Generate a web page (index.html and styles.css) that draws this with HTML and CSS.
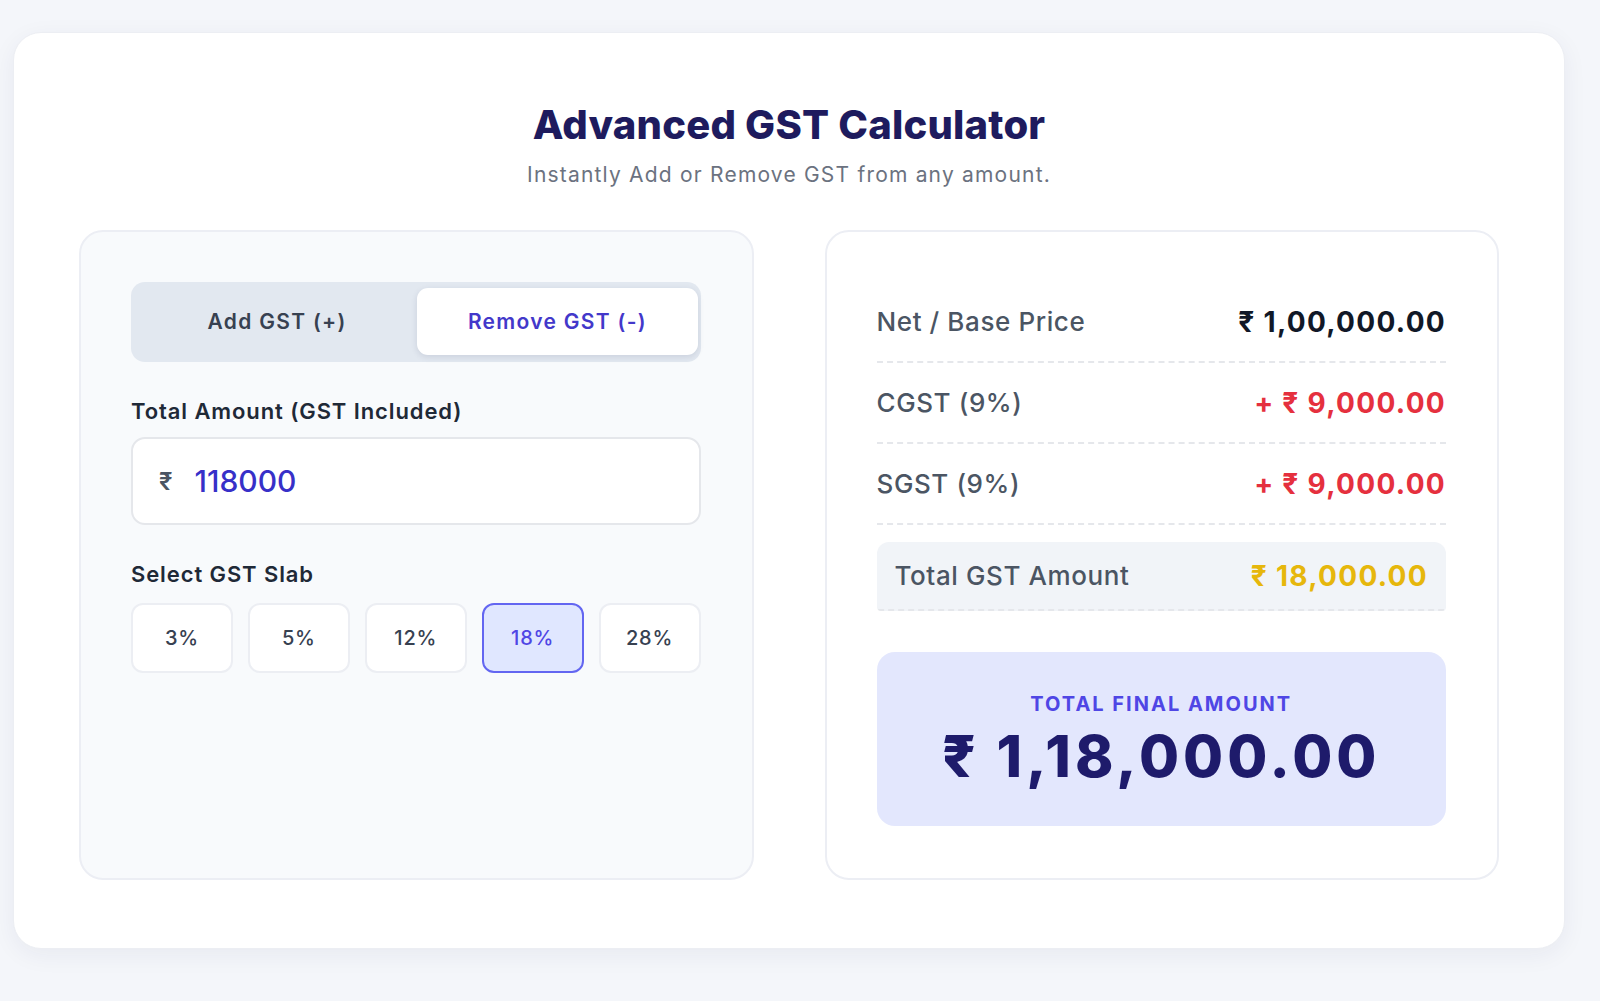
FILE: index.html
```html
<!DOCTYPE html>
<html lang="en">
<head>
<meta charset="utf-8">
<title>Advanced GST Calculator</title>
<link rel="stylesheet" href="styles.css">
</head>
<body>
<main class="card">
  <header class="head">
    <h1 class="title">Advanced GST Calculator</h1>
    <p class="subtitle">Instantly Add or Remove GST from any amount.</p>
  </header>
  <div class="grid">
    <section class="panel panel-input">
      <div class="toggle">
        <button class="toggle-btn">Add GST (+)</button>
        <button class="toggle-btn is-active">Remove GST (-)</button>
      </div>
      <label class="field-label">Total Amount (GST Included)</label>
      <div class="amount-input">
        <span class="cur">₹</span>
        <span class="amount-val">118000</span>
      </div>
      <div class="field-label slab-label">Select GST Slab</div>
      <div class="slabs">
        <button class="slab">3%</button>
        <button class="slab">5%</button>
        <button class="slab">12%</button>
        <button class="slab is-active">18%</button>
        <button class="slab">28%</button>
      </div>
    </section>
    <section class="panel panel-result">
      <div class="row">
        <span class="row-label">Net / Base Price</span>
        <span class="row-val">₹ 1,00,000.00</span>
      </div>
      <div class="row">
        <span class="row-label">CGST (9%)</span>
        <span class="row-val red">+ ₹ 9,000.00</span>
      </div>
      <div class="row">
        <span class="row-label">SGST (9%)</span>
        <span class="row-val red">+ ₹ 9,000.00</span>
      </div>
      <div class="row row-total">
        <span class="row-label">Total GST Amount</span>
        <span class="row-val gold">₹ 18,000.00</span>
      </div>
      <div class="final">
        <div class="final-label">TOTAL FINAL AMOUNT</div>
        <div class="final-val">₹ 1,18,000.00</div>
      </div>
    </section>
  </div>
</main>
</body>
</html>
```
FILE: styles.css
```css
* { box-sizing: border-box; }
html, body { margin: 0; }
body {
  background: #f4f6fa;
  font-family: Inter, "Noto Sans", "DejaVu Sans", sans-serif;
  padding: 32px 35px 52px 13px;
  color: #1f2937;
}
.card {
  background: #ffffff;
  border: 1px solid #eceef3;
  border-radius: 28px;
  box-shadow: 0 6px 24px rgba(30, 41, 80, 0.06);
  padding: 69px 65px 68px;
}
.head { text-align: center; }
.title {
  margin: 0;
  font-size: 40px;
  line-height: 46px;
  font-weight: 800;
  color: #1e1b5e;
  letter-spacing: 0.2px;
}
.subtitle {
  margin: 15px 0 0;
  font-size: 21px;
  line-height: 24px;
  color: #6b7280;
  letter-spacing: 1.2px;
}
.grid {
  margin-top: 43px;
  display: grid;
  grid-template-columns: 1fr 1fr;
  gap: 71px;
}
.panel {
  border: 2px solid #eceef4;
  border-radius: 24px;
  padding: 50px 51px 50px 50px;
  height: 650px;
}
.panel-input { background: #f8fafc; }
.panel-result { background: #ffffff; }

.toggle {
  display: flex;
  background: #e2e8f0;
  border-radius: 14px;
  padding: 6px 3px 7px 6px;
  height: 80px;
}
.toggle-btn {
  flex: 1;
  border: 0;
  background: transparent;
  border-radius: 11px;
  font-family: inherit;
  font-size: 21px;
  font-weight: 600;
  letter-spacing: 1.3px;
  color: #374151;
}
.toggle-btn.is-active {
  background: #ffffff;
  color: #4338ca;
  box-shadow: 0 2px 6px rgba(30, 41, 80, 0.12);
}
.field-label {
  display: block;
  margin-top: 34px;
  font-size: 22px;
  line-height: 30px;
  font-weight: 600;
  color: #1f2937;
  letter-spacing: 0.9px;
}
.amount-input {
  margin-top: 11px;
  height: 88px;
  background: #ffffff;
  border: 2px solid #e5e7eb;
  border-radius: 14px;
  display: flex;
  align-items: center;
  padding: 0 26px;
  gap: 22px;
}
.cur {
  font-size: 24px;
  font-weight: 600;
  color: #4b5563;
}
.amount-val {
  font-size: 30px;
  font-weight: 500;
  color: #3730c8;
}
.slab-label { margin-top: 34px; }
.slabs {
  margin-top: 14px;
  display: grid;
  grid-template-columns: repeat(5, 1fr);
  gap: 15px;
}
.slab {
  height: 70px;
  background: #ffffff;
  border: 2px solid #eceef3;
  border-radius: 12px;
  font-family: inherit;
  font-size: 20px;
  font-weight: 500;
  letter-spacing: 0.8px;
  color: #374151;
}
.slab.is-active {
  background: #e0e7ff;
  border-color: #6366f1;
  color: #4f46e5;
}

.row {
  display: flex;
  justify-content: space-between;
  align-items: center;
  padding: 25px 0 24px;
  border-bottom: 2px dashed #e5e7eb;
  line-height: 30px;
}
.row-label {
  font-size: 26px;
  font-weight: 500;
  color: #4b5563;
  letter-spacing: 0.6px;
}
.row-val {
  font-size: 28px;
  font-weight: 700;
  color: #111827;
  letter-spacing: 1.3px;
}
.row-val.red { color: #e5303e; }
.row-val.gold { color: #e6b70c; }
.row-total {
  margin-top: 17px;
  background: #f1f4f8;
  border-radius: 12px 12px 4px 4px;
  padding: 19px 18px 18px;
}
.final {
  margin-top: 41px;
  background: #e3e7fd;
  border-radius: 18px;
  text-align: center;
  padding: 40px 20px 36px;
}
.final-label {
  font-size: 20px;
  line-height: 24px;
  font-weight: 700;
  letter-spacing: 2px;
  color: #4f46e5;
}
.final-val {
  margin-top: 7px;
  font-size: 58px;
  line-height: 67px;
  font-weight: 800;
  color: #1e1b6b;
  letter-spacing: 4px;
}
```
